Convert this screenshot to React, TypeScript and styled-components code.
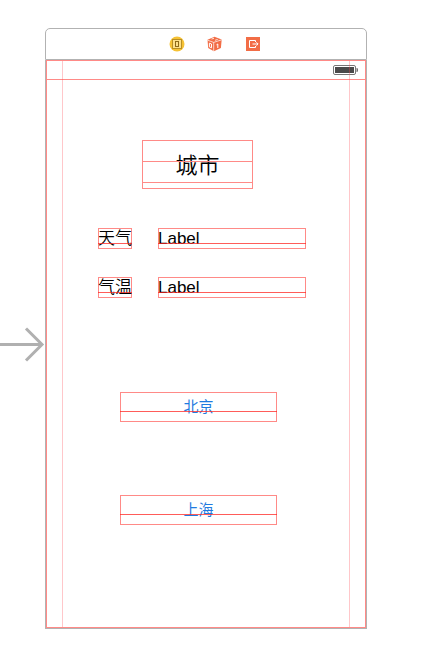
import React from "react";
import styled, { createGlobalStyle } from "styled-components";

const GRAY = "#b2b2b2";
const OUTLINE = "#ff8a87";
const BASELINE = "rgba(255, 38, 34, 0.75)";

const GlobalStyle = createGlobalStyle`
  *, *::before, *::after { box-sizing: border-box; }
  body {
    margin: 0;
    background: #fff;
    color: #000;
    font-family: "Liberation Sans", "Noto Sans CJK SC", sans-serif;
  }
`;

const Canvas = styled.main`
  display: grid;
  grid-template-columns: 45px 1fr 54px;
  padding: 28px 0 38px;
`;

const SceneDock = styled.header`
  grid-column: 2;
  display: flex;
  align-items: center;
  justify-content: center;
  gap: 22px;
  height: 32px;
  padding-left: 18px;
  border: 1px solid ${GRAY};
  border-radius: 5px 5px 0 0;
`;

const DockIcon = styled.svg`
  display: block;
  width: 16px;
  height: 16px;
`;

const EntryArrow = styled.svg`
  grid-column: 1;
  align-self: center;
  width: 45px;
  height: 36px;
`;

const Device = styled.section`
  grid-column: 2;
  border: 1px solid ${GRAY};
  border-top: 0;
`;

const Screen = styled.div`
  position: relative;
  min-height: 568px;
  border: 1px solid ${OUTLINE};
`;

const MarginGuides = styled.div`
  position: absolute;
  inset: 0 15px;
  border: solid rgba(255, 70, 80, 0.3);
  border-width: 0 1px;
  pointer-events: none;
`;

const StatusBar = styled.div`
  display: flex;
  align-items: center;
  justify-content: flex-end;
  height: 19px;
  padding-right: 7px;
  border-bottom: 1px solid ${OUTLINE};
`;

const Battery = styled.svg`
  display: block;
  width: 25px;
  height: 10px;
`;

const Content = styled.div`
  display: flex;
  flex-direction: column;
  padding: 60px 59px 102px 51px;
`;

const outlined = `
  position: relative;
  border: 0;
  box-shadow: inset 0 0 0 1px ${OUTLINE};
  white-space: nowrap;
  &::after {
    content: "";
    position: absolute;
    left: 0;
    right: 0;
    height: 1px;
    background: ${BASELINE};
  }
`;

const Title = styled.h1`
  ${outlined}
  height: 49px;
  margin: 0 53px 39px 44px;
  font-size: 22px;
  line-height: 51px;
  font-weight: 350;
  text-align: center;
  &::after {
    top: 21px;
    height: 22px;
    background: none;
    border: solid ${OUTLINE};
    border-width: 1px 0;
  }
`;

const Readings = styled.dl`
  display: grid;
  grid-template-columns: 34px 1fr;
  gap: 28px 26px;
  margin: 0 0 94px;
`;

const Term = styled.dt`
  ${outlined}
  height: 21px;
  font-size: 17px;
  font-weight: 350;
  line-height: 21px;
  &::after { top: 15px; }
`;

const Value = styled.dd`
  ${outlined}
  height: 21px;
  margin: 0;
  font-size: 17px;
  line-height: 21px;
  &::after { top: 15px; }
`;

const CityList = styled.div`
  display: flex;
  flex-direction: column;
  gap: 73px;
  margin: 0 29px 0 22px;
`;

const CityButton = styled.button`
  ${outlined}
  height: 30px;
  padding: 0;
  background: none;
  color: #1f7be0;
  font: inherit;
  font-size: 15px;
  line-height: 30px;
  &::after { top: 19px; }
`;

function ControllerIcon() {
  return (
    <DockIcon viewBox="0 0 16 16" aria-label="View Controller">
      <circle cx="8" cy="8" r="7.5" fill="#f6c234" />
      <rect x="3.5" y="3.5" width="9" height="9" fill="#fde08a" stroke="#b98f24" />
      <rect x="6.5" y="5.5" width="3" height="5" fill="#fde08a" stroke="#8d6a18" />
    </DockIcon>
  );
}

function ResponderIcon() {
  return (
    <DockIcon viewBox="0 0 16 16" aria-label="First Responder">
      <path d="M7.5 .8 14.7 3.4 13.9 12 6.9 15.2 1.2 12 .5 3.8Z" fill="#f26d46" />
      <path d="M.5 4.2 6.7 6.4 14.7 3.8M6.7 6.4V15" fill="none" stroke="#fff" strokeWidth=".7" />
      <path d="M4.5 3 7 2.3M8 4.3 10.7 3.4" stroke="#fff" strokeWidth=".8" />
      <path d="M2.4 7.2 4.5 8V11.8L2.4 10.8ZM9.5 8.8 10.8 8V12" fill="none" stroke="#fff" strokeWidth="1" />
    </DockIcon>
  );
}

function ExitIcon() {
  return (
    <DockIcon viewBox="0 0 16 16" aria-label="Exit">
      <rect x="1" y="1" width="14" height="14" fill="#f26d46" />
      <path d="M10.5 6V4.5h-6v7h6V10" fill="none" stroke="#fff" />
      <path d="M7.5 8h5.5M11.4 6.3 13.1 8 11.4 9.7" fill="none" stroke="#fff" />
    </DockIcon>
  );
}

const readings = [
  { term: "天气", value: "Label" },
  { term: "气温", value: "Label" },
];

const cities = ["北京", "上海"];

export default function App() {
  return (
    <>
      <GlobalStyle />
      <Canvas>
        <SceneDock>
          <ControllerIcon />
          <ResponderIcon />
          <ExitIcon />
        </SceneDock>
        <EntryArrow viewBox="0 0 45 36" aria-hidden="true">
          <path d="M0 17.5H42M26 1.5 42 17.5 26 33.5" fill="none" stroke="#b0b0b0" strokeWidth="3" />
        </EntryArrow>
        <Device>
          <Screen>
            <StatusBar>
              <Battery viewBox="0 0 25 10" aria-label="Battery">
                <rect x=".5" y=".5" width="22" height="9" rx="1.5" fill="#fff" stroke="#777" />
                <rect x="2" y="2" width="19" height="6" fill="#4a4a4a" />
                <path d="M23.5 3h.5q1 0 1 2t-1 2h-.5Z" fill="#666" />
              </Battery>
            </StatusBar>
            <Content>
              <Title>城市</Title>
              <Readings>
                {readings.map(({ term, value }) => (
                  <React.Fragment key={term}>
                    <Term>{term}</Term>
                    <Value>{value}</Value>
                  </React.Fragment>
                ))}
              </Readings>
              <CityList>
                {cities.map((city) => (
                  <CityButton key={city} type="button">{city}</CityButton>
                ))}
              </CityList>
            </Content>
            <MarginGuides />
          </Screen>
        </Device>
      </Canvas>
    </>
  );
}
